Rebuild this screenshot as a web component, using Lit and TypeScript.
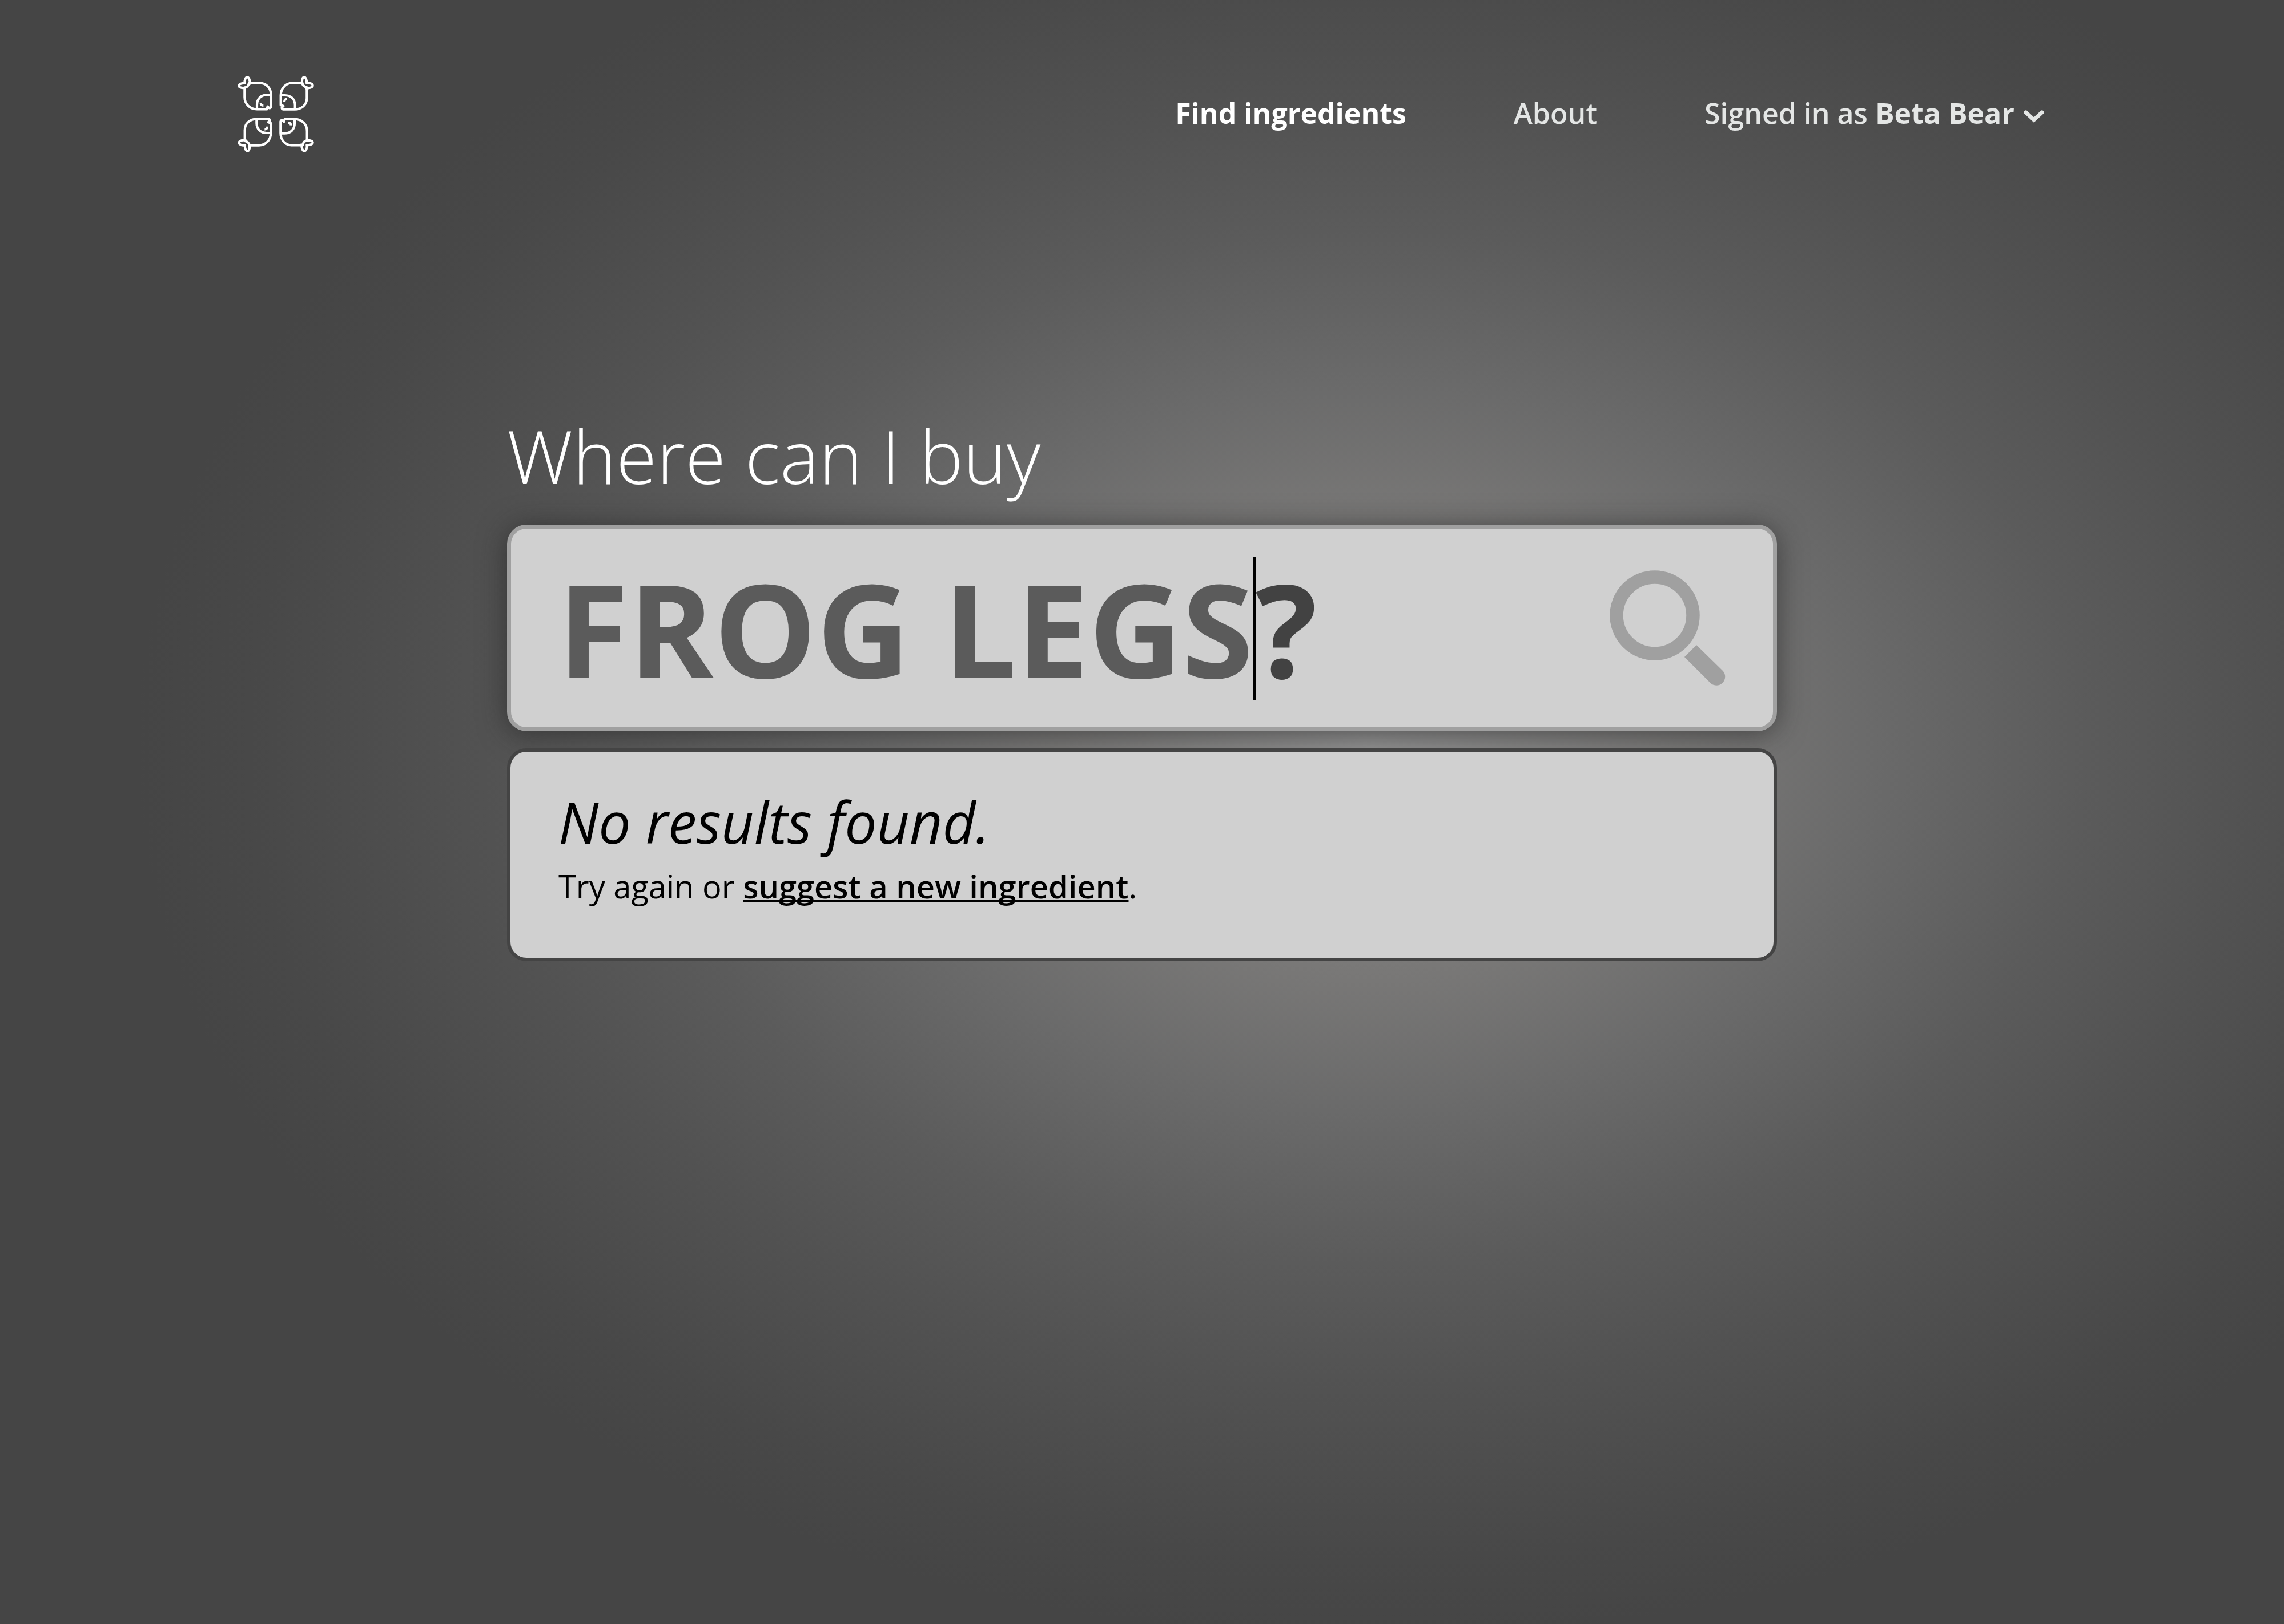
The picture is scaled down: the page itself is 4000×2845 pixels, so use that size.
import { LitElement, html, css, svg } from "lit";
import { customElement, state } from "lit/decorators.js";

// One fish of the emblem; the emblem repeats it at each quarter turn.
const fish = (angle: number) => svg`
  <g transform="rotate(${angle} 249 239)">
    <path d="M112 84 C116 62 107 45 99 45 C91 45 83 60 86 77 C70 75 55 82 55 90 C55 98 70 105 92 99" />
    <path d="M85 100 Q104 98 108 76 H165 C200 76 224 103 224 140 V200 Q222 209 214 207 L206 199 L202 213 H150 C112 213 85 185 85 150 Z" />
    <path d="M224 138 H202 C170 138 150 160 150 190 V213" />
    <path d="M170 180 Q169 194 184 194" />
  </g>
`;

@customElement("app-root")
export class AppRoot extends LitElement {
  @state() private term = "FROG LEGS";

  static styles = css`
    :host {
      display: block;
      font-family: "Open Sans", "Noto Sans", sans-serif;
      color: #fff;
    }
    .page {
      box-sizing: border-box;
      min-height: 100vh;
      background: radial-gradient(
        54% 55% at 60% 46%,
        #929292 0%,
        #797877 25%,
        #6a6a6a 41%,
        #5b5b5b 58%,
        #525252 72%,
        #484848 91%,
        #454545 100%
      );
    }
    .top {
      display: flex;
      align-items: center;
      justify-content: space-between;
      padding: 132px 420px 0 416px;
      height: 136px;
    }
    .logo { display: block; width: 134px; height: 134px; }
    .logo svg { display: block; width: 100%; height: 100%; }
    .nav { display: flex; align-items: center; gap: 188px; padding-bottom: 4px; }
    .link {
      font: inherit;
      font-size: 50px;
      line-height: 68px;
      font-weight: 600;
      color: #e4e6e5;
      text-decoration: none;
      background: none;
      border: 0;
      padding: 0;
      display: flex;
      align-items: center;
      gap: 16px;
      white-space: pre;
    }
    .link b { font-weight: 700; }
    .current { font-weight: 700; color: #fff; }
    .chevron { width: 36px; height: 22px; margin-top: 12px; }
    .main { width: 2224px; max-width: 90%; margin: 0 auto; padding-top: 438px; }
    .question {
      display: block;
      font-size: 129px;
      line-height: 184px;
      font-weight: 300;
    }
    .search {
      box-sizing: border-box;
      display: flex;
      align-items: center;
      margin-top: 29px;
      padding: 14px 83px 14px 82px;
      border: 7px solid #a0a0a0;
      border-radius: 34px;
      background: #d0d0d0;
      box-shadow: 0 4px 50px rgba(30, 30, 30, 0.6);
    }
    .entry {
      flex: 1;
      min-width: 0;
      display: flex;
      align-items: center;
      font-size: 226px;
      font-weight: 700;
      line-height: 320px;
    }
    .term {
      font: inherit;
      line-height: 320px;
      height: 320px;
      field-sizing: content;
      border: 0;
      margin: 0;
      padding: 0;
      outline: 0;
      background: none;
      color: #5b5b5b;
      text-transform: uppercase;
    }
    .caret { width: 4px; height: 251px; background: #000; }
    .mark { color: #424242; }
    .go { border: 0; padding: 0; background: none; color: #a0a0a0; }
    .go svg { display: block; width: 202px; height: 202px; }
    .results {
      box-sizing: border-box;
      margin-top: 30px;
      padding: 52px 84px 87px;
      border: 6px solid #444;
      border-radius: 34px;
      background: #d0d0d0;
      color: #000;
    }
    .none { margin: 0; font-size: 100px; line-height: 140px; font-style: italic; }
    .hint { margin: 4px 0 0; font-size: 56px; line-height: 78px; }
    .hint a {
      color: inherit;
      font-weight: 600;
      text-decoration: underline;
      text-decoration-skip-ink: none;
      text-decoration-thickness: 4px;
    }
  `;

  private onInput(e: Event) {
    this.term = (e.target as HTMLInputElement).value;
  }

  render() {
    return html`
      <div class="page">
        <header class="top">
          <a class="logo" href="#home" aria-label="Home">
            <svg viewBox="48 38 402 402" fill="none" stroke="#fff" stroke-width="12.5" stroke-linejoin="round">
              ${[0, 90, 180, 270].map(fish)}
            </svg>
          </a>
          <nav class="nav">
            <a class="link current" href="#find">Find ingredients</a>
            <a class="link" href="#about">About</a>
            <button class="link" type="button"><span>Signed in as <b>Beta Bear</b></span><svg class="chevron" viewBox="0 0 36 22" fill="none" stroke="currentColor" stroke-width="7" stroke-linecap="round"><path d="M4 4 L18 17 L32 4" /></svg></button>
          </nav>
        </header>
        <main class="main">
          <label class="question" for="term">Where can I buy</label>
          <form class="search">
            <div class="entry">
              <input class="term" id="term" type="text" .value=${this.term} @input=${this.onInput} />
              <span class="caret"></span>
              <span class="mark">?</span>
            </div>
            <button class="go" type="button" aria-label="Search">
              <svg viewBox="0 0 202 202">
                <circle cx="78" cy="79" r="67" fill="none" stroke="currentColor" stroke-width="23.5" />
                <path d="M151 131 L197 176 A15 15 0 0 1 175 197 L130 152 Z" fill="currentColor" />
              </svg>
            </button>
          </form>
          <section class="results">
            <p class="none">No results found.</p>
            <p class="hint">Try again or <a href="#suggest">suggest a new ingredient</a>.</p>
          </section>
        </main>
      </div>
    `;
  }
}
